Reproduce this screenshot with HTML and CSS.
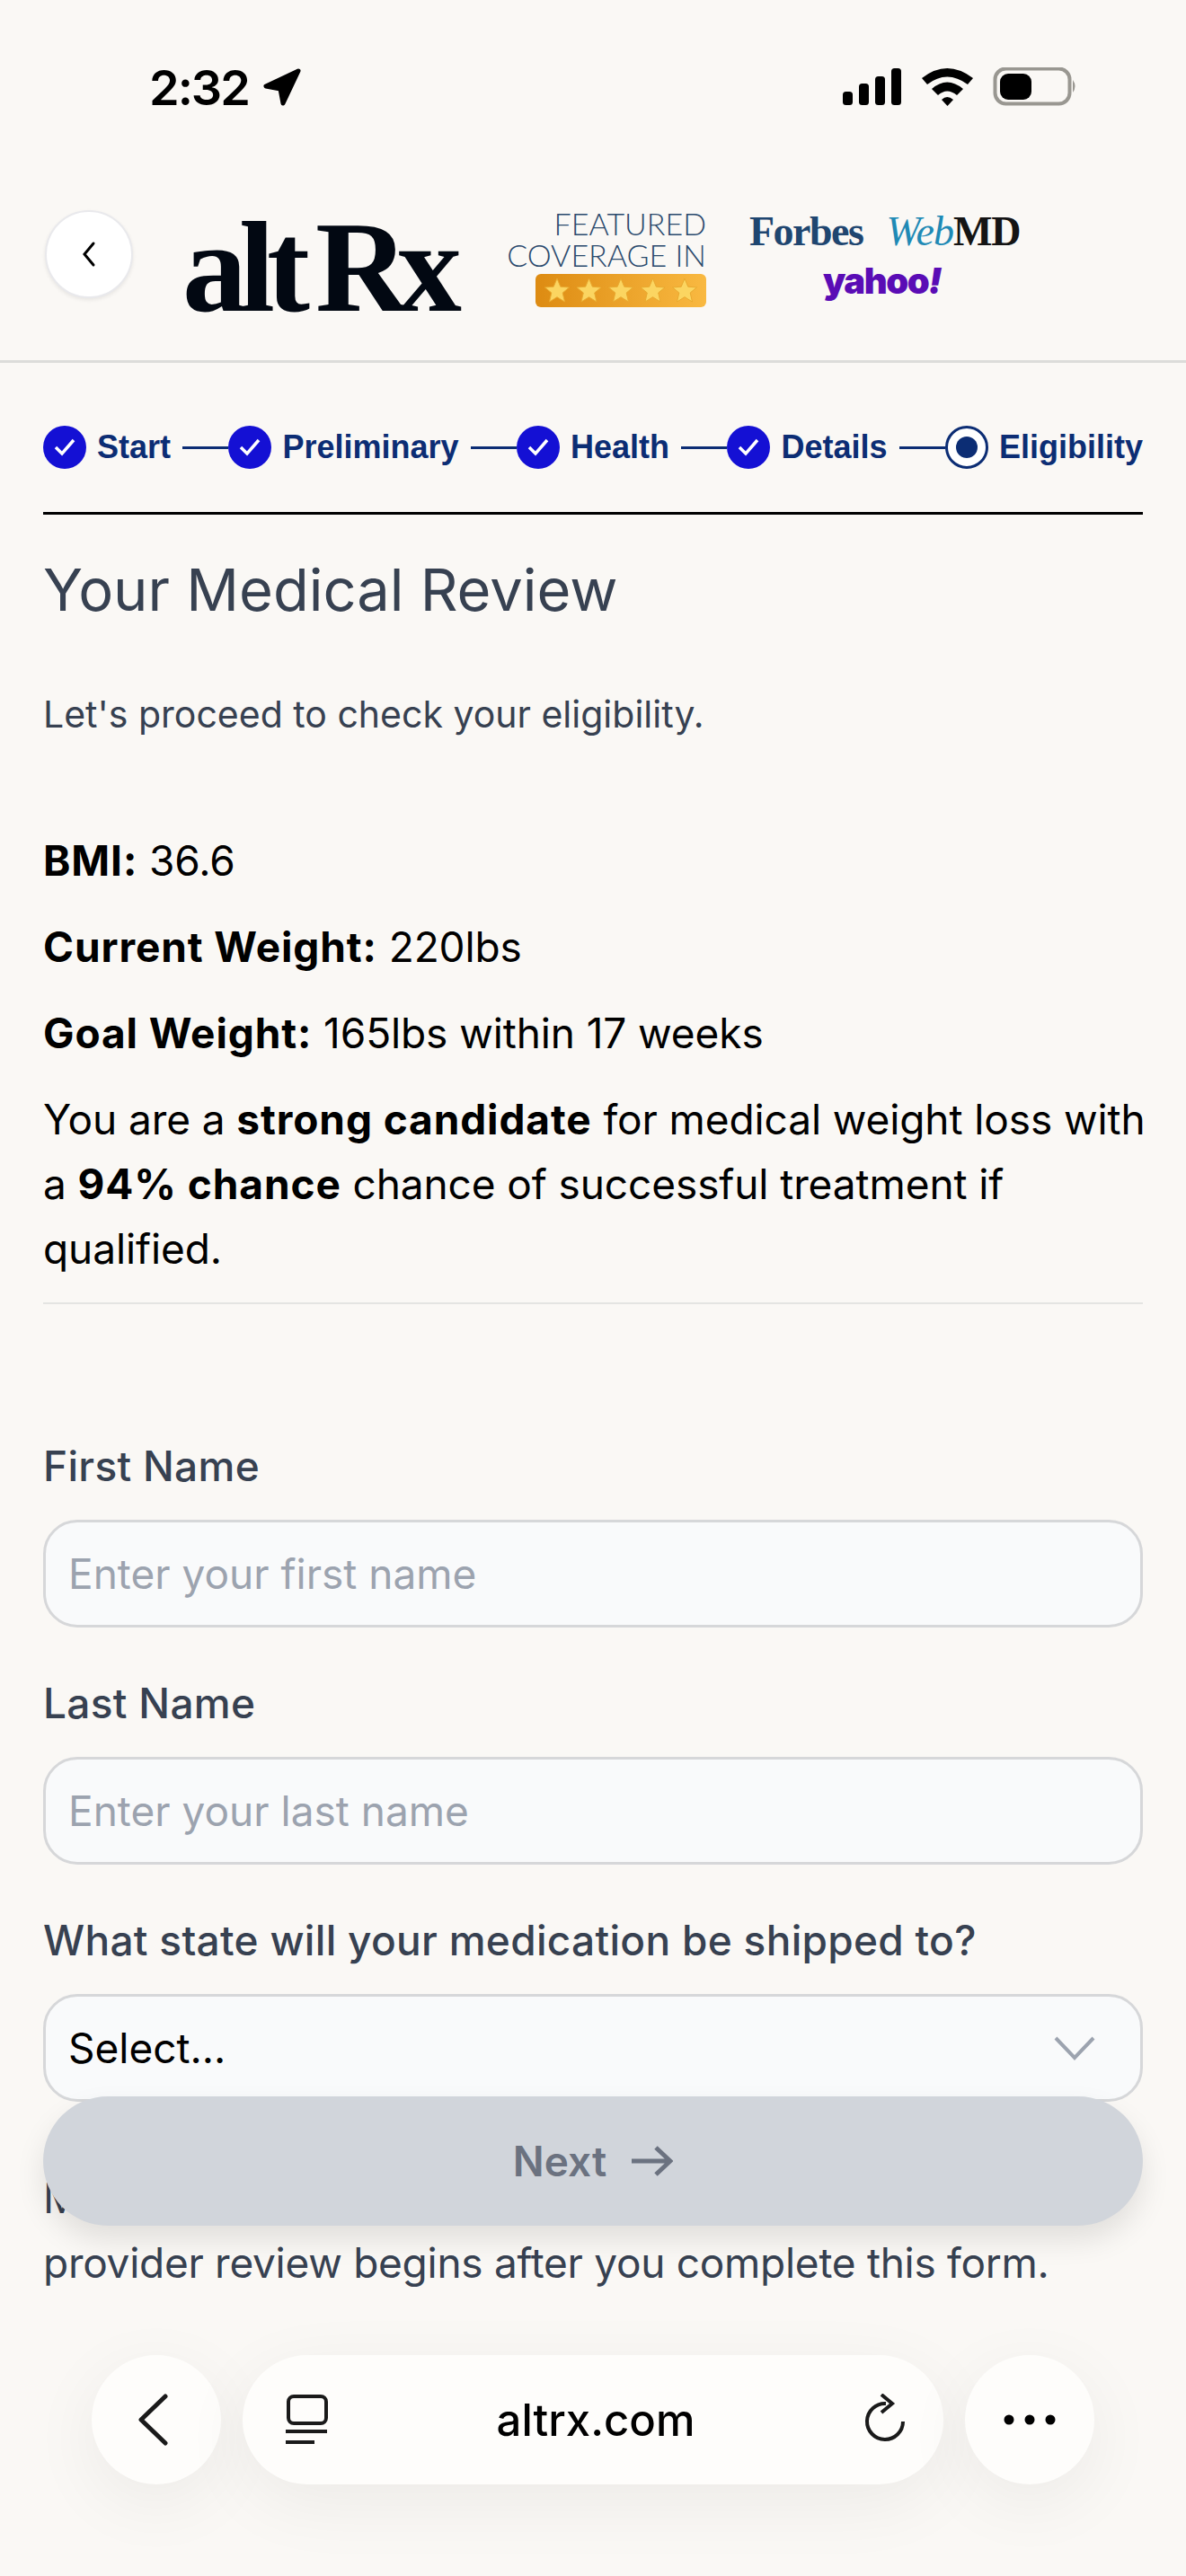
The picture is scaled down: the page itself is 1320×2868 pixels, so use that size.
FILE: index.html
```html
<!DOCTYPE html>
<html>
<head>
    <title>altRx - Your Medical Review</title>
    <link rel="stylesheet" href="styles.css">
</head>
<body>
<div class="page">
    <div class="status">
        <div class="status-time">
            <span>2:32</span>
            <svg class="status-arrow" width="44" height="42" viewBox="0 0 44 42"><path d="M40 3 L4 20 L20 23 L23 39 Z" fill="#000" stroke="#000" stroke-width="5" stroke-linejoin="round"/></svg>
        </div>
        <svg class="status-icons" width="262" height="44" viewBox="0 0 262 44">
            <rect x="0" y="27" width="11" height="15" rx="3.5"/>
            <rect x="18" y="18" width="11" height="24" rx="3.5"/>
            <rect x="36" y="10" width="11" height="32" rx="3.5"/>
            <rect x="54" y="1" width="11" height="41" rx="3.5"/>
            <path d="M88 12 Q116 -10 145 12 L139 19 Q116 2 94 19 Z"/>
            <path d="M99 24 Q116 9 134 24 L127 31 Q116 22 106 31 Z"/>
            <path d="M110 36 Q116 30 123 36 L116.500 43 Z"/>
            <rect x="169.500" y="1.500" width="83" height="39" rx="12" fill="none" stroke="#999791" stroke-width="4"/>
            <rect x="175" y="7" width="35" height="29" rx="9"/>
            <path d="M256 14 Q261 21 256 28 Z" fill="#999791"/>
        </svg>
    </div>

    <div class="header">
        <div class="back-btn">
            <svg width="20" height="30" viewBox="0 0 20 30"><path d="M15 3 L5 15 L15 27" fill="none" stroke="#000" stroke-width="3" stroke-linecap="round"/></svg>
        </div>
        <div class="logo"><span class="logo-alt">alt</span><span class="logo-rx">Rx</span></div>
        <div class="featured">
            <div class="featured-text">FEATURED<br>COVERAGE IN</div>
            <svg class="stars" width="190" height="37" viewBox="0 0 190 37">
                <defs>
                    <linearGradient id="badge" x1="0" x2="1" y1="0" y2="0">
                        <stop offset="0" stop-color="#dd8b12"/>
                        <stop offset="1" stop-color="#f9b941"/>
                    </linearGradient>
                </defs>
                <rect width="190" height="37" rx="6" fill="url(#badge)"/>
                <g fill="#fbd561" stroke="#e9a92f" stroke-width="1">
                    <path d="M24 5 L27.800 14.200 L37.500 15 L30.200 21 L32.500 31 L24 25.700 L15.500 31 L17.800 21 L10.500 15 L20.200 14.200 Z"/>
                    <path transform="translate(35.500 0)" d="M24 5 L27.800 14.200 L37.500 15 L30.200 21 L32.500 31 L24 25.700 L15.500 31 L17.800 21 L10.500 15 L20.200 14.200 Z"/>
                    <path transform="translate(71 0)" d="M24 5 L27.800 14.200 L37.500 15 L30.200 21 L32.500 31 L24 25.700 L15.500 31 L17.800 21 L10.500 15 L20.200 14.200 Z"/>
                    <path transform="translate(106.500 0)" d="M24 5 L27.800 14.200 L37.500 15 L30.200 21 L32.500 31 L24 25.700 L15.500 31 L17.800 21 L10.500 15 L20.200 14.200 Z"/>
                    <path transform="translate(142 0)" d="M24 5 L27.800 14.200 L37.500 15 L30.200 21 L32.500 31 L24 25.700 L15.500 31 L17.800 21 L10.500 15 L20.200 14.200 Z"/>
                </g>
            </svg>
        </div>
        <div class="press">
            <div class="press-row">
                <span class="forbes">Forbes</span>
                <span class="webmd"><i>Web</i><b>MD</b></span>
            </div>
            <div class="yahoo">yahoo<i>!</i></div>
        </div>
    </div>

    <div class="main">
        <div class="steps">
            <span class="step-dot"><svg width="24" height="20" viewBox="0 0 24 20"><path d="M2 10 L9 17 L22 2" fill="none" stroke="#fff" stroke-width="3.500"/></svg></span>
            <span class="step-name">Start</span>
            <span class="step-line"></span>
            <span class="step-dot"><svg width="24" height="20" viewBox="0 0 24 20"><path d="M2 10 L9 17 L22 2" fill="none" stroke="#fff" stroke-width="3.500"/></svg></span>
            <span class="step-name">Preliminary</span>
            <span class="step-line"></span>
            <span class="step-dot"><svg width="24" height="20" viewBox="0 0 24 20"><path d="M2 10 L9 17 L22 2" fill="none" stroke="#fff" stroke-width="3.500"/></svg></span>
            <span class="step-name">Health</span>
            <span class="step-line"></span>
            <span class="step-dot"><svg width="24" height="20" viewBox="0 0 24 20"><path d="M2 10 L9 17 L22 2" fill="none" stroke="#fff" stroke-width="3.500"/></svg></span>
            <span class="step-name">Details</span>
            <span class="step-line"></span>
            <span class="step-dot step-dot-current"><span></span></span>
            <span class="step-name">Eligibility</span>
        </div>

        <h1 class="title">Your Medical Review</h1>
        <p class="intro">Let's proceed to check your eligibility.</p>

        <p class="stat first"><b>BMI:</b> 36.6</p>
        <p class="stat"><b>Current Weight:</b> 220lbs</p>
        <p class="stat"><b>Goal Weight:</b> 165lbs within 17 weeks</p>
        <p class="stat">You are a <b>strong candidate</b> for medical weight loss with<br>a <b>94% chance</b> chance of successful treatment if<br>qualified.</p>
        <div class="divider"></div>

        <label class="field-label first-label">First Name</label>
        <div class="field"><span class="placeholder">Enter your first name</span></div>
        <label class="field-label">Last Name</label>
        <div class="field"><span class="placeholder">Enter your last name</span></div>
        <label class="field-label">What state will your medication be shipped to?</label>
        <div class="field field-select">
            <span>Select...</span>
            <svg width="48" height="28" viewBox="0 0 48 28"><path d="M3 3 L24 25 L45 3" fill="none" stroke="#9ca3af" stroke-width="4"/></svg>
        </div>

        <p class="note">M<br>provider review begins after you complete this form.</p>
    </div>

    <div class="next-btn">
        <span>Next</span>
        <svg width="48" height="36" viewBox="0 0 48 36"><path d="M2 18 H44 M29 3 L45 18 L29 33" fill="none" stroke="#6b7280" stroke-width="5"/></svg>
    </div>

    <div class="browser">
        <div class="browser-round">
            <svg class="browser-back" width="34" height="58" viewBox="0 0 34 58"><path d="M30 3 L3 29 L30 55" fill="none" stroke="#1a1a1a" stroke-width="5" stroke-linecap="round" stroke-linejoin="round"/></svg>
        </div>
        <div class="browser-url">
            <svg width="48" height="56" viewBox="0 0 48 56"><rect x="3" y="2" width="42" height="30" rx="6" fill="none" stroke="#1a1a1a" stroke-width="4"/><path d="M0 41 H46 M0 53 H32" fill="none" stroke="#1a1a1a" stroke-width="4"/></svg>
            <span>altrx.com</span>
            <svg width="50" height="58" viewBox="0 0 50 58"><path d="M26 11 A 20 20 0 1 0 45 31" fill="none" stroke="#1a1a1a" stroke-width="4"/><path d="M21 1 L33 11 L21 21" fill="none" stroke="#1a1a1a" stroke-width="4"/></svg>
        </div>
        <div class="browser-round">
            <svg width="58" height="12" viewBox="0 0 58 12"><circle cx="6" cy="6" r="5.500"/><circle cx="29" cy="6" r="5.500"/><circle cx="52" cy="6" r="5.500"/></svg>
        </div>
    </div>
</div>
</body>
</html>
```

FILE: styles.css
```css
body {
    margin: 0;
    font-family: Inter, "Liberation Sans", sans-serif;
    color: #000;
}
.page {
    position: relative;
    width: 1320px;
    height: 2868px;
    overflow: hidden;
    background: #faf8f5;
}

/* phone status bar */
.status {
    box-sizing: border-box;
    height: 234px;
    padding: 75px 120px 0 166px;
    display: flex;
    justify-content: space-between;
}
.status-time {
    display: flex;
    align-items: center;
    height: 44px;
    font-size: 54px;
    font-weight: 600;
    letter-spacing: -2px;
    gap: 15px;
}

/* header with logo */
.header {
    box-sizing: border-box;
    height: 170px;
    border-bottom: 3px solid #dcdcda;
    display: flex;
    padding-left: 50px;
}
.back-btn {
    flex: none;
    width: 98px;
    height: 98px;
    box-sizing: border-box;
    border-radius: 50%;
    background: #fff;
    border: 2px solid #e9e9ec;
    box-shadow: 0 2px 4px rgba(0, 0, 0, 0.08);
    display: flex;
    align-items: center;
    justify-content: center;
}
.logo {
    flex: none;
    width: 375px;
    margin: -2px 0 0 55px;
    font-family: "Liberation Serif", serif;
    font-weight: 700;
    font-size: 144px;
    line-height: 132px;
    color: #020812;
    white-space: nowrap;
}
.logo-alt {
    letter-spacing: -9px;
}
.logo-rx {
    margin-left: 15px;
    letter-spacing: -13px;
}
.featured {
    flex: none;
    display: flex;
    flex-direction: column;
    align-items: flex-end;
    width: 208px;
    margin-top: -3px;
}
.featured-text {
    font-family: Lato, sans-serif;
    font-weight: 300;
    font-size: 34px;
    line-height: 35px;
    color: #2b4a6d;
    text-align: right;
    white-space: nowrap;
}
.stars {
    margin-top: 4px;
}
.press {
    flex: none;
    width: 300px;
    margin-left: 48px;
}
.press-row {
    display: flex;
    align-items: center;
    gap: 26px;
    height: 42px;
    margin-top: 2px;
}
.forbes {
    font-family: "Liberation Serif", serif;
    font-weight: 700;
    font-size: 46px;
    letter-spacing: -1.500px;
    color: #1f4670;
}
.webmd {
    font-family: "Liberation Serif", serif;
    font-size: 46px;
    letter-spacing: -1px;
}
.webmd i {
    color: #1f8ab5;
}
.webmd b {
    color: #141414;
}
.yahoo {
    margin: 12px 0 0 82px;
    font-family: Inter, sans-serif;
    font-weight: 900;
    font-size: 40px;
    line-height: 46px;
    letter-spacing: -1.500px;
    color: #5a0cb5;
}

/* main column */
.main {
    padding: 0 48px;
}
.steps {
    box-sizing: border-box;
    height: 169px;
    padding-top: 70px;
    border-bottom: 3px solid #000;
    display: flex;
    align-items: flex-start;
}
.step-dot {
    flex: none;
    width: 48px;
    height: 48px;
    border-radius: 50%;
    background: #1410d4;
    display: flex;
    align-items: center;
    justify-content: center;
}
.step-dot-current {
    box-sizing: border-box;
    background: #fff;
    border: 3px solid #0c2d74;
}
.step-dot-current span {
    width: 24px;
    height: 24px;
    border-radius: 50%;
    background: #0c2d74;
}
.step-name {
    margin-left: 12px;
    font-family: "Liberation Sans", sans-serif;
    font-weight: 700;
    font-size: 36px;
    line-height: 48px;
    color: #0c2d74;
}
.step-line {
    flex: 1;
    height: 3px;
    margin: 23px 0 0 13px;
    background: #0c2d74;
}
.title {
    margin: 48px 0 0;
    font-size: 65px;
    line-height: 72px;
    font-weight: 400;
    color: #374151;
}
.intro {
    margin: 72px 0 0;
    font-size: 41px;
    line-height: 60px;
    color: #374151;
}
.stat {
    margin: 24px 0 0;
    font-size: 46px;
    line-height: 72px;
    letter-spacing: -0.1px;
    white-space: nowrap;
}
.stat b {
    letter-spacing: 0.9px;
}
.stat.first {
    margin-top: 97px;
}
.divider {
    height: 2px;
    margin-top: 24px;
    background: #e4e4e2;
}

/* form */
.field-label {
    display: block;
    margin-top: 54px;
    font-size: 46px;
    letter-spacing: 0.3px;
    line-height: 60px;
    font-weight: 500;
    color: #374151;
}
.first-label {
    margin-top: 150px;
}
.field {
    box-sizing: border-box;
    height: 120px;
    margin-top: 30px;
    padding: 0 25px;
    border: 3px solid #d6d7d9;
    border-radius: 38px;
    background: #f9fafb;
    display: flex;
    align-items: center;
    justify-content: space-between;
    font-size: 46px;
}
.placeholder {
    color: #9ca3af;
}
.field-select svg {
    margin-right: 24px;
}
.note {
    margin: 71px 0 0;
    font-size: 46px;
    letter-spacing: -0.28px;
    line-height: 72px;
    color: #374151;
}

/* overlays: sticky button and safari bar */
.next-btn {
    position: absolute;
    left: 48px;
    top: 2334px;
    width: 1224px;
    height: 144px;
    border-radius: 72px;
    background: #d1d5db;
    box-shadow: 0 16px 32px rgba(0, 0, 0, 0.1);
    display: flex;
    align-items: center;
    justify-content: center;
    gap: 26px;
    font-size: 46px;
    font-weight: 600;
    color: #6b7280;
}
.browser {
    position: absolute;
    left: 102px;
    top: 2622px;
    width: 1116px;
    display: flex;
    gap: 24px;
}
.browser-round,
.browser-url {
    height: 144px;
    background: #fefdfb;
    border-radius: 72px;
    box-shadow: 0 20px 80px rgba(0, 0, 0, 0.06);
    display: flex;
    align-items: center;
    justify-content: center;
}
.browser-round {
    flex: none;
    width: 144px;
}
.browser-back {
    margin-right: 6px;
}
.browser-url {
    flex: 1;
    box-sizing: border-box;
    padding: 0 40px 0 48px;
    justify-content: space-between;
    font-size: 49px;
    font-weight: 500;
}
```
